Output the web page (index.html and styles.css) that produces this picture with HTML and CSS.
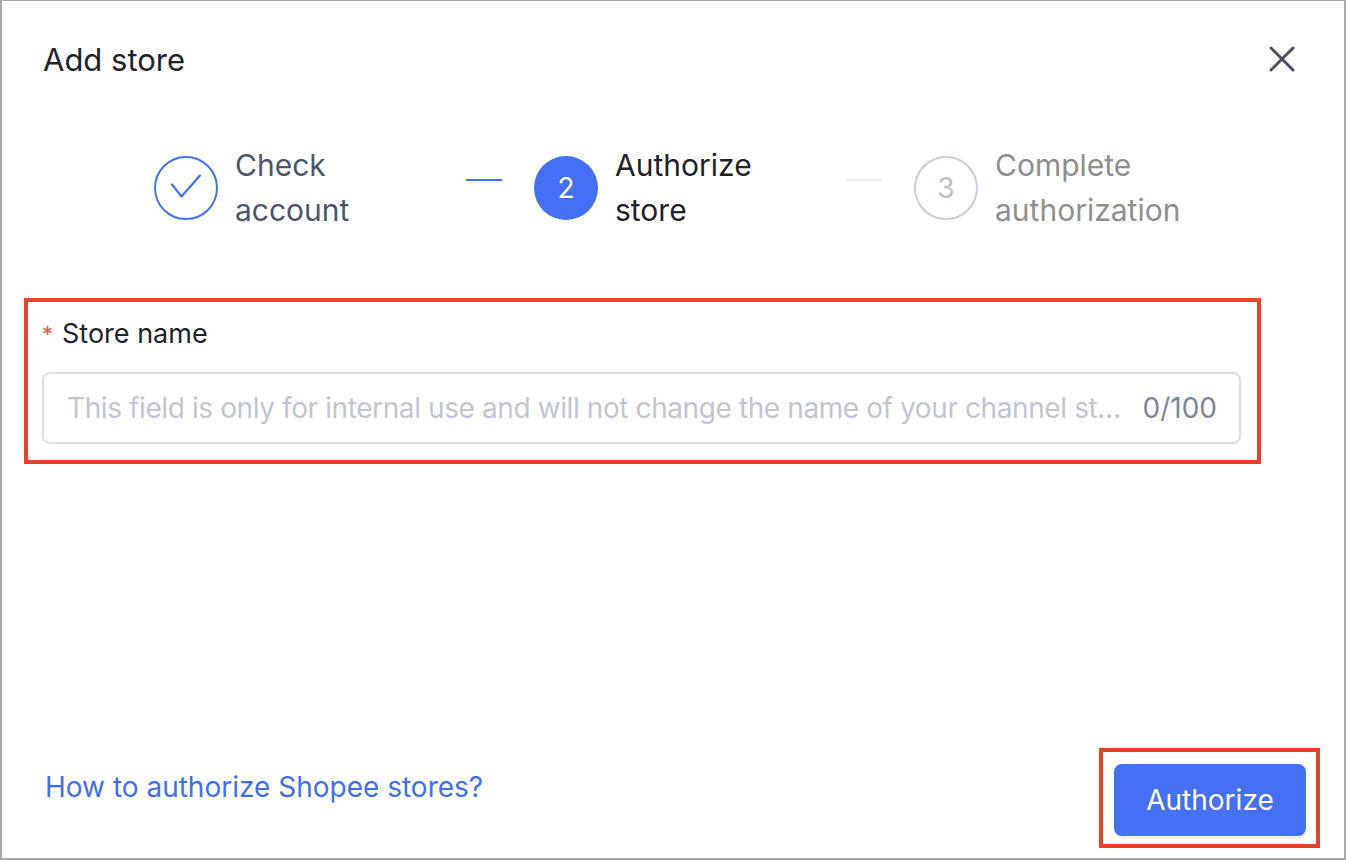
FILE: index.html
```html
<!DOCTYPE html>
<html lang="en">
<head>
  <meta charset="UTF-8">
  <title>Add store</title>
  <link rel="stylesheet" href="styles.css">
</head>
<body>
  <div class="modal">
    <!-- Header -->
    <div class="modal-header">
      <span class="modal-title">Add store</span>
      <button class="close-btn" aria-label="Close">
        <svg width="26" height="26" viewBox="0 0 26 26">
          <path d="M2 2 L24 24 M24 2 L2 24" stroke="#4b4f5c" stroke-width="3" stroke-linecap="round" fill="none"/>
        </svg>
      </button>
    </div>

    <!-- Steps -->
    <div class="steps">
      <div class="step step-done">
        <div class="step-icon">
          <svg width="64" height="64" viewBox="0 0 64 64">
            <circle cx="32" cy="32" r="31" stroke="#4370f4" stroke-width="2" fill="none"/>
            <path d="M18 28.5 L27.5 40.5 L46 19.5" stroke="#4370f4" stroke-width="2.2" fill="none" stroke-linejoin="round" stroke-linecap="round"/>
          </svg>
        </div>
        <div class="step-title">Check<br>account</div>
      </div>
      <div class="step-line line-done"></div>
      <div class="step step-active">
        <div class="step-icon">2</div>
        <div class="step-title">Authorize<br>store</div>
      </div>
      <div class="step-line"></div>
      <div class="step step-wait">
        <div class="step-icon">3</div>
        <div class="step-title">Complete<br>authorization</div>
      </div>
    </div>

    <!-- Store name -->
    <div class="highlight form-item">
      <label class="form-label" for="storeName"><span class="required">*</span>Store name</label>
      <div class="input-wrap">
        <input type="text" id="storeName" placeholder="This field is only for internal use and will not change the name of your channel store">
        <span class="counter">0/100</span>
      </div>
    </div>

    <!-- Footer -->
    <div class="modal-footer">
      <a class="help-link" href="#">How to authorize Shopee stores?</a>
      <div class="highlight btn-box">
        <button class="btn-primary">Authorize</button>
      </div>
    </div>
  </div>
</body>
</html>
```

FILE: styles.css
```css
* {
  box-sizing: border-box;
}

body {
  margin: 0;
  font-family: Inter, "Noto Sans", "Liberation Sans", sans-serif;
  background: #fff;
  color: #1f2329;
}

.modal {
  width: 1346px;
  height: 860px;
  border: 2px solid #a9a9a9;
  border-top-width: 1px;
  display: flex;
  flex-direction: column;
  padding: 0 41px;
}

/* Header */
.modal-header {
  display: flex;
  justify-content: space-between;
  align-items: center;
  height: 116px;
  padding-top: 1px;
}
.modal-title {
  font-size: 31px;
  line-height: 40px;
  color: #1f2329;
}
.close-btn {
  border: 0;
  background: none;
  padding: 0;
  margin-right: 8px;
  margin-top: -2px;
  cursor: pointer;
  display: flex;
}

/* Steps */
.steps {
  display: flex;
  align-items: flex-start;
  margin-left: 111px;
  padding-top: 26px;
  height: 181px;
}
.step {
  display: flex;
  align-items: center;
  width: 312px;
}
.step-icon {
  width: 64px;
  height: 64px;
  border-radius: 50%;
  flex-shrink: 0;
  display: flex;
  align-items: center;
  justify-content: center;
  font-size: 28px;
  margin-right: 17px;
}
.step-active .step-icon {
  background: #4370f4;
  color: #fff;
}
.step-wait .step-icon {
  border: 2px solid #c9ceda;
  color: #bac0cd;
}
.step-title {
  font-size: 30px;
  line-height: 45px;
  white-space: nowrap;
}
.step-done .step-title {
  color: #4e5566;
}
.step-active .step-title {
  color: #1f2329;
}
.step-wait .step-title {
  color: #8e8e8e;
}
.step-line {
  width: 36px;
  height: 2px;
  background: #e8e9ec;
  margin: 36px 32px 0 0;
  flex-shrink: 0;
}
.step-line.line-done {
  background: #4370f4;
}

/* Annotation boxes */
.highlight {
  border: 4px solid #e8412c;
}

/* Form */
.form-item {
  width: 1237px;
  margin-left: -19px;
  padding: 12px 16px 16px 14px;
}
.form-label {
  display: block;
  font-size: 27px;
  line-height: 40px;
  color: #1f2329;
}
.required {
  color: #ec5b3f;
  font-size: 22px;
  margin-right: 9px;
  vertical-align: top;
}
.input-wrap {
  margin-top: 18px;
  display: flex;
  align-items: center;
  height: 72px;
  border: 2px solid #dcdfe8;
  border-radius: 8px;
  padding: 0 22px 0 23px;
}
.input-wrap input {
  flex: 1;
  min-width: 0;
  border: 0;
  outline: none;
  font-family: inherit;
  font-size: 28px;
  letter-spacing: -0.4px;
  color: #1f2329;
  text-overflow: ellipsis;
  padding: 0;
}
.input-wrap input::placeholder {
  color: #c0c5d1;
}
.counter {
  font-size: 28px;
  color: #7f8696;
  margin-left: 20px;
}

/* Footer */
.modal-footer {
  margin-top: auto;
  display: flex;
  justify-content: space-between;
  align-items: center;
  margin-right: -17px;
  margin-bottom: 10px;
}
.help-link {
  font-size: 28px;
  color: #3f6ef2;
  text-decoration: none;
  margin-left: 2px;
  margin-bottom: 22px;
}
.btn-box {
  padding: 12px 10px 8px 11px;
}
.btn-primary {
  width: 192px;
  height: 72px;
  border: 0;
  border-radius: 8px;
  background: #4370f4;
  color: #fff;
  font-family: inherit;
  font-size: 28px;
  cursor: pointer;
  box-shadow: 0 3px 0 #f0f0f2;
}
```
